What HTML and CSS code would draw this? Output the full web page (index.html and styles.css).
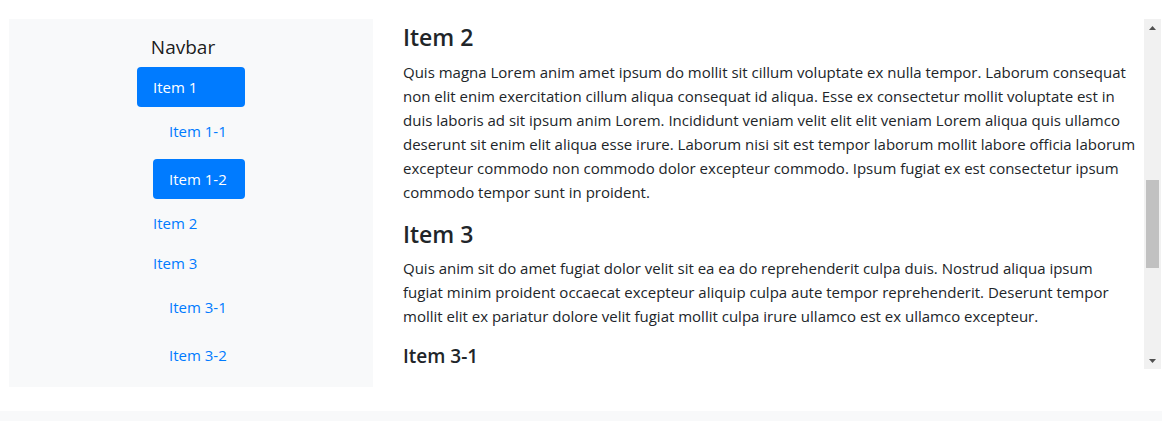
FILE: index.html
```html
<!DOCTYPE html>
<html lang="en">
<head>
<meta charset="utf-8">
<title>Scrollspy</title>
<link rel="stylesheet" href="styles.css">
</head>
<body>
<div class="page">
  <nav class="side">
    <a class="brand" href="#">Navbar</a>
    <div class="pills">
      <a class="pill active" href="#item-1">Item 1</a>
      <div class="sub">
        <a class="pill nested" href="#item-1-1">Item 1-1</a>
        <a class="pill nested active" href="#item-1-2">Item 1-2</a>
      </div>
      <a class="pill" href="#item-2">Item 2</a>
      <a class="pill" href="#item-3">Item 3</a>
      <div class="sub">
        <a class="pill nested" href="#item-3-1">Item 3-1</a>
        <a class="pill nested" href="#item-3-2">Item 3-2</a>
      </div>
    </div>
  </nav>
  <div class="main">
    <div class="spy" id="spy">
      <h4 id="item-1">Item 1</h4>
      <p>Ex consequat commodo adipisicing exercitation aute excepteur occaecat ullamco duis aliqua id magna ullamco eu. Do aute ipsum ipsum ullamco cillum consectetur ut et aute consectetur labore. Fugiat laborum incididunt tempor eu consequat enim dolore proident. Qui laborum do non excepteur nulla magna eiusmod consectetur in. Aliqua et aliqua officia quis et incididunt voluptate non anim reprehenderit adipisicing dolore ut consequat deserunt mollit dolore. Aliquip nulla enim veniam non fugiat id cupidatat nulla elit cupidatat commodo velit ut eiusmod cupidatat elit dolore.</p>
      <h5 id="item-1-1">Item 1-1</h5>
      <p>Amet tempor mollit aliquip pariatur excepteur commodo do ea cillum commodo Lorem et occaecat elit qui et. Aliquip labore ex ex esse voluptate occaecat Lorem ullamco deserunt. Aliqua cillum excepteur irure consequat id quis ea. Sit proident ullamco aute magna pariatur nostrud labore. Reprehenderit aliqua commodo eiusmod aliquip est do duis amet proident magna consectetur consequat eu commodo fugiat non quis. Enim aliquip exercitation ullamco adipisicing voluptate excepteur minim exercitation minim minim commodo adipisicing exercitation officia nisi adipisicing. Anim id duis qui consequat labore adipisicing sint dolor elit cillum anim et fugiat.</p>
      <h5 id="item-1-2">Item 1-2</h5>
      <p>Cillum nisi deserunt magna eiusmod qui eiusmod velit voluptate pariatur laborum sunt enim. Irure laboris mollit consequat incididunt sint et culpa culpa incididunt adipisicing magna magna occaecat. Nulla ipsum cillum eiusmod sint elit excepteur ea labore enim consectetur in labore anim. Proident ullamco ipsum esse elit ut Lorem eiusmod dolor et eiusmod. Anim occaecat nulla in non consequat eiusmod velit incididunt.</p>
      <h4 id="item-2">Item 2</h4>
      <p>Quis magna Lorem anim amet ipsum do mollit sit cillum voluptate ex nulla tempor. Laborum consequat non elit enim exercitation cillum aliqua consequat id aliqua. Esse ex consectetur mollit voluptate est in duis laboris ad sit ipsum anim Lorem. Incididunt veniam velit elit elit veniam Lorem aliqua quis ullamco deserunt sit enim elit aliqua esse irure. Laborum nisi sit est tempor laborum mollit labore officia laborum excepteur commodo non commodo dolor excepteur commodo. Ipsum fugiat ex est consectetur ipsum commodo tempor sunt in proident.</p>
      <h4 id="item-3">Item 3</h4>
      <p>Quis anim sit do amet fugiat dolor velit sit ea ea do reprehenderit culpa duis. Nostrud aliqua ipsum fugiat&nbsp;minim proident occaecat excepteur aliquip culpa aute tempor reprehenderit. Deserunt tempor mollit elit ex pariatur dolore velit fugiat mollit culpa irure ullamco est ex ullamco excepteur.</p>
      <h5 id="item-3-1">Item 3-1</h5>
      <p>Deserunt quis elit Lorem eiusmod amet enim enim amet minim Lorem proident nostrud. Ea id dolore anim exercitation aute fugiat labore voluptate cillum do laboris labore. Ex velit exercitation nisi enim labore reprehenderit labore nostrud ut ut. Esse officia sunt duis aliquip ullamco tempor eiusmod deserunt irure nostrud irure. Ullamco proident veniam laboris ea consectetur magna sunt ex exercitation aliquip minim enim culpa occaecat exercitation. Est tempor excepteur aliquip laborum consequat do deserunt laborum esse eiusmod irure proident ipsum esse qui.</p>
      <h5 id="item-3-2">Item 3-2</h5>
      <p>Labore sit culpa commodo elit adipisicing sit aliquip elit proident voluptate minim mollit nostrud aute reprehenderit do. Mollit excepteur eu Lorem ipsum anim commodo sint labore Lorem in exercitation velit incididunt. Occaecat consectetur nisi in occaecat proident minim enim sunt reprehenderit exercitation cupidatat et do officia. Aliquip consequat ad labore labore mollit ut amet. Sit pariatur tempor proident in veniam culpa aliqua excepteur elit magna fugiat eiusmod amet officia.</p>
    </div>
    <div class="sbar" aria-hidden="true">
      <div class="sbtn"><svg width="7" height="4" viewBox="0 0 7 4"><polygon points="3.5,0 7,4 0,4" fill="#505050"/></svg></div>
      <div class="strack"><div class="sthumb"></div></div>
      <div class="sbtn"><svg width="7" height="4" viewBox="0 0 7 4"><polygon points="0,0 7,0 3.5,4" fill="#505050"/></svg></div>
    </div>
  </div>
</div>
<div class="next"></div>
<script src="script.js"></script>
</body>
</html>
```
FILE: styles.css
```css
* { box-sizing: border-box; }
html, body { margin: 0; padding: 0; background: #fff; }
body {
  font-family: "Open Sans", "Noto Sans", sans-serif;
  font-size: 15px;
  line-height: 24px;
  color: #212529;
}
.page {
  display: flex;
  align-items: flex-start;
  padding: 19px 1px 0 9px;
  gap: 15px;
}
.side {
  width: 364px;
  flex: none;
  background: #f8f9fa;
  padding: 8px 16px;
  display: flex;
  flex-direction: column;
  align-items: center;
}
.brand {
  display: block;
  font-size: 19px;
  line-height: 30px;
  padding: 5px 0;
  margin-right: 16px;
  color: rgba(0,0,0,.9);
  text-decoration: none;
}
.pills {
  width: 108px;
  display: flex;
  flex-direction: column;
}
.sub {
  display: flex;
  flex-direction: column;
}
.pill {
  display: block;
  padding: 8px 16px;
  line-height: 24px;
  color: #007bff;
  text-decoration: none;
  border-radius: 4px;
}
.pill.nested {
  margin: 4px 0 4px 16px;
}
.pill.active {
  background: #007bff;
  color: #fff;
  font-weight: 500;
}
.main {
  flex: 1;
  min-width: 0;
  padding-left: 15px;
  display: flex;
  height: 350px;
}
.spy {
  position: relative;
  flex: 1;
  min-width: 0;
  height: 350px;
  overflow: hidden;
}
.sbar {
  width: 17px;
  flex: none;
  background: #f1f1f1;
  display: flex;
  flex-direction: column;
}
.sbtn {
  height: 17px;
  flex: none;
  display: flex;
  align-items: center;
  justify-content: center;
}
.sbtn svg { display: block; }
.strack {
  flex: 1;
  padding: 0 2px;
}
.sthumb {
  margin-top: 144px;
  height: 88px;
  background: #c1c1c1;
}
.spy h4 {
  font-size: 23px;
  font-weight: 600;
  line-height: 28.8px;
  margin: 0 0 8px;
}
.spy h5 {
  font-size: 19px;
  font-weight: 600;
  line-height: 24px;
  margin: 0 0 8px;
}
.spy p {
  margin: 0 0 16px;
}
.next {
  margin-top: 24px;
  height: 30px;
  background: #f8f9fa;
}
```
FILE: script.js
```js
var spy = document.getElementById('spy');
var target = document.getElementById('item-2');
spy.scrollTop = target.offsetTop - 4;
```
